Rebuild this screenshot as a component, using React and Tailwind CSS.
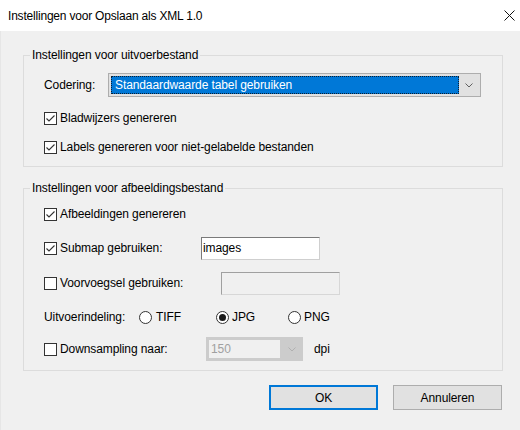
import React from "react";

function CheckBox({ checked }) {
  return (
    <span className="w-[13px] h-[13px] shrink-0 border border-[#333333] bg-white flex items-center justify-center">
      {checked && (
        <svg width="11" height="11" viewBox="0 0 11 11">
          <path d="M1.5 5.5 L4 8 L9.5 2.5" fill="none" stroke="#333333" strokeWidth="1.1" />
        </svg>
      )}
    </span>
  );
}

function Radio({ checked }) {
  return (
    <span className="w-[13px] h-[13px] shrink-0 rounded-full border border-[#333333] bg-white flex items-center justify-center">
      {checked && <span className="w-[7px] h-[7px] rounded-full bg-[#1a1a1a]" />}
    </span>
  );
}

function Chevron({ color }) {
  return (
    <svg width="8" height="5" viewBox="0 0 8 5">
      <path d="M0.5 0.5 L4 4 L7.5 0.5" fill="none" stroke={color} strokeWidth="1" />
    </svg>
  );
}

function Check({ checked, label, className = "" }) {
  return (
    <div className={`flex items-center gap-[3px] shrink-0 ${className}`}>
      <CheckBox checked={checked} />
      <span>{label}</span>
    </div>
  );
}

function Group({ title, className = "", children }) {
  return (
    <div className={`relative ml-[22px] w-[480px] border border-[#dcdcdc] pl-[20px] ${className}`}>
      <span className="absolute -top-[9px] left-[6px] px-[2px] bg-[#f0f0f0] leading-[16px]">{title}</span>
      {children}
    </div>
  );
}

export default function App() {
  return (
    <div className="w-[520px] h-[430px] bg-white flex flex-col overflow-hidden text-[12px] tracking-[-0.1px] text-black font-['Segoe_UI','Liberation_Sans',sans-serif]">
      <div className="h-[31px] shrink-0 flex items-center justify-between pl-[8px] pr-[5px]">
        <span className="text-[12px] tracking-[-0.2px]">Instellingen voor Opslaan als XML 1.0</span>
        <svg width="11" height="11" viewBox="0 0 11 11">
          <path d="M0.5 0.5 L10.5 10.5 M10.5 0.5 L0.5 10.5" stroke="#111111" strokeWidth="1" />
        </svg>
      </div>

      <div className="flex-1 bg-[#f0f0f0] border-l border-[#e6e6e6]">
        <Group title="Instellingen voor uitvoerbestand" className="mt-[24px] pt-[17px] pb-[7px]">
          <div className="h-[24px] flex items-center">
            <span className="w-[64px] shrink-0">Codering:</span>
            <div className="w-[373px] h-[24px] border border-[#adadad] bg-[#e1e1e1] flex items-center p-[2px]">
              <div className="flex-1 h-full bg-[#0078d7] border border-dotted border-[#0b1f33] text-white flex items-center pl-[3px]">
                Standaardwaarde tabel gebruiken
              </div>
              <div className="w-[19px] h-full flex items-center justify-center">
                <Chevron color="#606060" />
              </div>
            </div>
          </div>
          <Check checked label="Bladwijzers genereren" className="h-[24px] mt-[9px]" />
          <Check checked label="Labels genereren voor niet-gelabelde bestanden" className="h-[24px] mt-[5px]" />
        </Group>

        <Group title="Instellingen voor afbeeldingsbestand" className="mt-[21px] pt-[13px] pb-[9px]">
          <Check checked label="Afbeeldingen genereren" className="h-[24px]" />

          <div className="h-[24px] mt-[10px] flex items-center">
            <Check checked label="Submap gebruiken:" className="w-[157px]" />
            <div className="w-[119px] h-[23px] bg-white border border-[#7a7a7a] border-b-[#cfcfcf] border-r-[#cfcfcf] flex items-center pl-[1px]">
              images
            </div>
          </div>

          <div className="h-[24px] mt-[11px] flex items-center">
            <Check label="Voorvoegsel gebruiken:" className="w-[177px]" />
            <div className="w-[119px] h-[23px] bg-[#f0f0f0] border border-[#a0a0a0] border-b-[#d7d7d7] border-r-[#d7d7d7]" />
          </div>

          <div className="h-[24px] mt-[10px] flex items-center">
            <span className="w-[95px] shrink-0">Uitvoerindeling:</span>
            <div className="w-[77px] flex items-center gap-[4px]">
              <Radio />
              <span>TIFF</span>
            </div>
            <div className="w-[72px] flex items-center gap-[3px]">
              <Radio checked />
              <span>JPG</span>
            </div>
            <div className="flex items-center gap-[3px]">
              <Radio />
              <span>PNG</span>
            </div>
          </div>

          <div className="h-[24px] mt-[8px] flex items-center">
            <Check label="Downsampling naar:" className="w-[162px]" />
            <div className="w-[97px] h-[24px] border border-[#cccccc] bg-[#cccccc] flex items-center">
              <div className="w-[75px] h-full bg-[#f0f0f0] border-[2px] border-[#cccccc] flex items-center pl-[2px] text-[#a0a0a0]">
                150
              </div>
              <div className="flex-1 flex items-center justify-center">
                <Chevron color="#b0b0b0" />
              </div>
            </div>
            <span className="ml-[11px]">dpi</span>
          </div>
        </Group>

        <div className="ml-[22px] w-[480px] mt-[14px] pr-[1px] flex justify-end gap-[15px]">
          <button className="w-[109px] h-[25px] bg-[#e1e1e1] border-2 border-[#0078d7] flex items-center justify-center">
            OK
          </button>
          <button className="w-[109px] h-[25px] bg-[#e1e1e1] border border-[#adadad] flex items-center justify-center">
            Annuleren
          </button>
        </div>
      </div>
    </div>
  );
}
